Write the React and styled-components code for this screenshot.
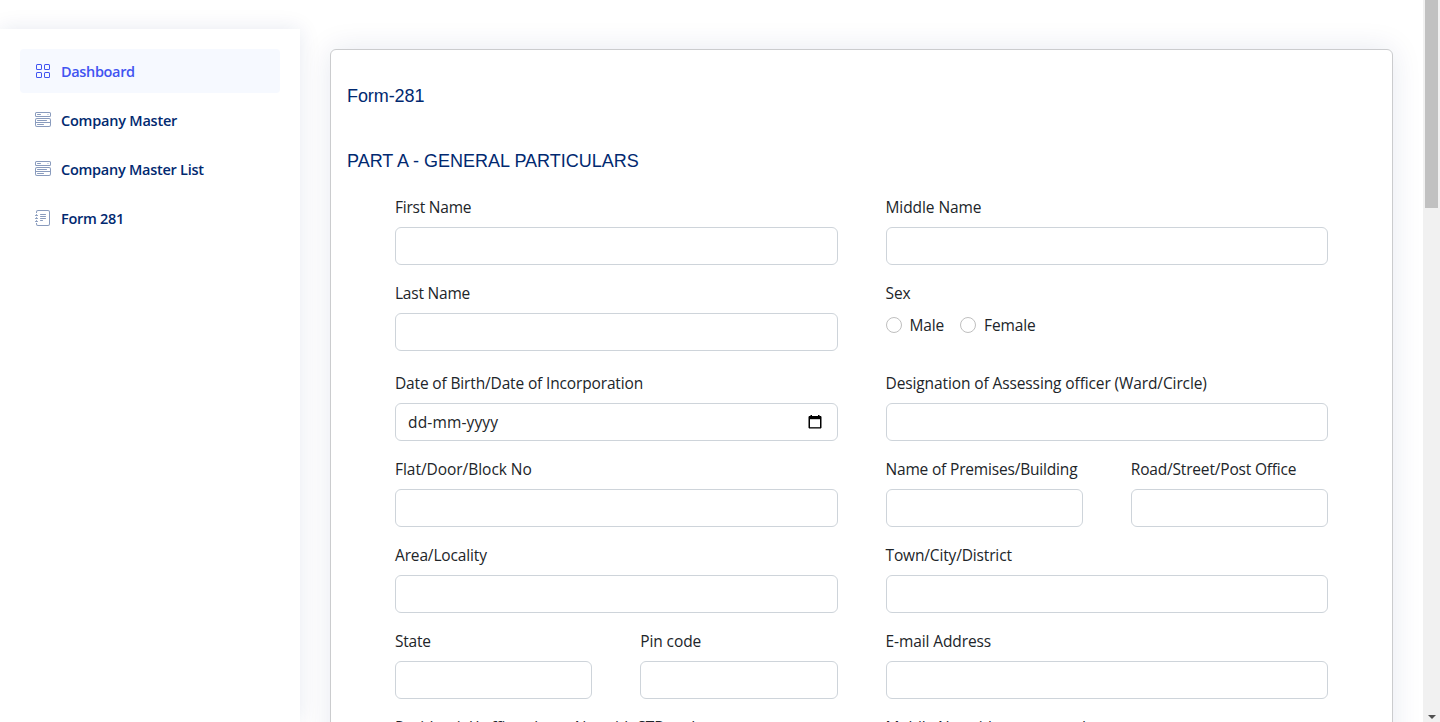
import React from "react";
import styled, { createGlobalStyle } from "styled-components";
import { BsGrid, BsMenuButtonWide, BsJournalText } from "react-icons/bs";

const GlobalStyle = createGlobalStyle`
  *, *::before, *::after { box-sizing: border-box; }
  body {
    margin: 0;
    background: #fff;
    color: #212529;
    font: 400 15.5px/24px "Open Sans", "Noto Sans", sans-serif;
    overflow: hidden;
  }
`;

const Page = styled.div`
  display: flex;
  height: 722px;
  overflow: hidden;
`;

const Sidebar = styled.aside`
  flex: 0 0 300px;
  margin-top: 29px;
  padding: 20px;
  background: #fff;
  box-shadow: 0 0 20px rgba(1, 41, 112, 0.1);
`;

const NavList = styled.nav`
  display: flex;
  flex-direction: column;
  gap: 5px;
`;

const NavLink = styled.a`
  display: flex;
  align-items: center;
  height: 44px;
  padding: 0 15px;
  border-radius: 4px;
  font-size: 14.5px;
  font-weight: 600;
  letter-spacing: ${(p) => p.$track || 0}px;
  color: ${(p) => (p.$active ? "#4154f1" : "#012970")};
  background: ${(p) => (p.$active ? "#f6f9ff" : "transparent")};
  svg {
    width: 16px;
    height: 16px;
    margin-right: 10px;
    color: ${(p) => (p.$active ? "#4154f1" : "#899bbd")};
  }
  span { padding-top: 2px; }
`;

const Main = styled.main`
  flex: 1;
  padding: 49px 30px 0;
`;

const Card = styled.section`
  height: 900px;
  padding: 0 16px;
  border: 1px solid #cbccce;
  border-radius: 6px;
  background: #fff;
  box-shadow: 0 0 30px rgba(1, 41, 112, 0.1);
`;

const Heading = styled.h5`
  margin: 0;
  padding-top: ${(p) => p.$top}px;
  font: 400 18px/22px "Liberation Sans", Arial, sans-serif;
  letter-spacing: ${(p) => p.$track || 0}px;
  color: #012970;
`;

const FormGrid = styled.form`
  display: grid;
  grid-template-columns: repeat(4, minmax(0, 1fr));
  column-gap: 48px;
  padding: 23px 48px 0;
`;

const Field = styled.div`
  grid-column: span ${(p) => p.$span};
  height: ${(p) => (p.$tall ? 90 : 86)}px;
`;

const Label = styled.label`
  display: block;
  width: max-content;
  margin-bottom: 8px;
  white-space: nowrap;
  letter-spacing: ${(p) => p.$track || 0}px;
`;

const Input = styled.input`
  display: block;
  width: 100%;
  height: 38px;
  padding: 6px 12px;
  border: 1px solid #ced4da;
  border-radius: 6px;
  background: #fff;
  font: inherit;
  outline: none;
`;

const DateBox = styled.div`
  display: flex;
  align-items: center;
  justify-content: space-between;
  height: 38px;
  padding: 0 14px 0 12px;
  border: 1px solid #ced4da;
  border-radius: 6px;
`;

const DateText = styled.span`
  letter-spacing: 0.15px;
`;

const Radios = styled.div`
  display: flex;
  gap: 16px;
`;

const Radio = styled.label`
  display: flex;
  align-items: center;
  gap: 8px;
  height: 24px;
  letter-spacing: -0.15px;
`;

const RadioDot = styled.input`
  appearance: none;
  width: 16px;
  height: 16px;
  margin: 0;
  border: 1px solid #bfbfbf;
  border-radius: 50%;
  background: #fff;
`;

const ScrollTrack = styled.div`
  display: flex;
  flex-direction: column;
  justify-content: space-between;
  align-items: center;
  flex: 0 0 17px;
  background: #f1f1f1;
  z-index: 1;
`;

const ScrollThumb = styled.div`
  width: 13px;
  height: 208px;
  background: #c1c1c1;
`;

const ScrollArrow = styled.div`
  margin-bottom: 3px;
  border: 4px solid transparent;
  border-top-color: #505050;
  border-bottom: 0;
`;

const CalendarIcon = () => (
  <svg width="16" height="16" viewBox="0 0 16 16" fill="none">
    <path d="M2.2 2H3.5V1H5v1h6V1h1.500v1h1.300l.7.7v11l-.7.7H2.200l-.7-.7v-11z" fill="#000" />
    <path d="M3 5.200h10v8H3z" fill="#fff" />
  </svg>
);

const NAV = [
  { text: "Dashboard", Icon: BsGrid, active: true, track: -0.35 },
  { text: "Company Master", Icon: BsMenuButtonWide, track: -0.22 },
  { text: "Company Master List", Icon: BsMenuButtonWide, track: -0.26 },
  { text: "Form 281", Icon: BsJournalText, track: -0.3 },
];

const FIELDS = [
  { label: "First Name", span: 2, track: -0.22 },
  { label: "Middle Name", span: 2, track: -0.08 },
  { label: "Last Name", span: 2, tall: true, track: -0.22 },
  { label: "Sex", span: 2, kind: "radio", tall: true, track: -0.1 },
  { label: "Date of Birth/Date of Incorporation", span: 2, kind: "date", track: -0.15 },
  { label: "Designation of Assessing officer (Ward/Circle)", span: 2, track: -0.11 },
  { label: "Flat/Door/Block No", span: 2, track: -0.04 },
  { label: "Name of Premises/Building", span: 1, track: -0.18 },
  { label: "Road/Street/Post Office", span: 1, track: -0.18 },
  { label: "Area/Locality", span: 2, track: -0.15 },
  { label: "Town/City/District", span: 2, track: -0.15 },
  { label: "State", span: 1, track: -0.25 },
  { label: "Pin code", span: 1, track: -0.1 },
  { label: "E-mail Address", span: 2, track: -0.1 },
  { label: "Residential/ office phone No. with STD code", span: 2, track: -0.14 },
  { label: "Mobile No. with country code", span: 2, track: -0.1 },
];

function Control({ kind }) {
  if (kind === "radio") {
    return (
      <Radios>
        <Radio><RadioDot type="radio" name="sex" /><span>Male</span></Radio>
        <Radio><RadioDot type="radio" name="sex" /><span>Female</span></Radio>
      </Radios>
    );
  }
  if (kind === "date") {
    return <DateBox><DateText>dd-mm-yyyy</DateText><CalendarIcon /></DateBox>;
  }
  return <Input type="text" />;
}

export default function App() {
  return (
    <Page>
      <GlobalStyle />
      <Sidebar>
        <NavList>
          {NAV.map(({ text, Icon, active, track }) => (
            <NavLink key={text} $active={active} $track={track}><Icon /><span>{text}</span></NavLink>
          ))}
        </NavList>
      </Sidebar>
      <Main>
        <Card>
          <Heading $top={35} $track={-0.08}>Form-281</Heading>
          <Heading $top={43}>PART A - GENERAL PARTICULARS</Heading>
          <FormGrid>
            {FIELDS.map((f) => (
              <Field key={f.label} $span={f.span} $tall={f.tall}>
                <Label $track={f.track}>{f.label}</Label>
                <Control kind={f.kind} />
              </Field>
            ))}
          </FormGrid>
        </Card>
      </Main>
      <ScrollTrack><ScrollThumb /><ScrollArrow /></ScrollTrack>
    </Page>
  );
}
